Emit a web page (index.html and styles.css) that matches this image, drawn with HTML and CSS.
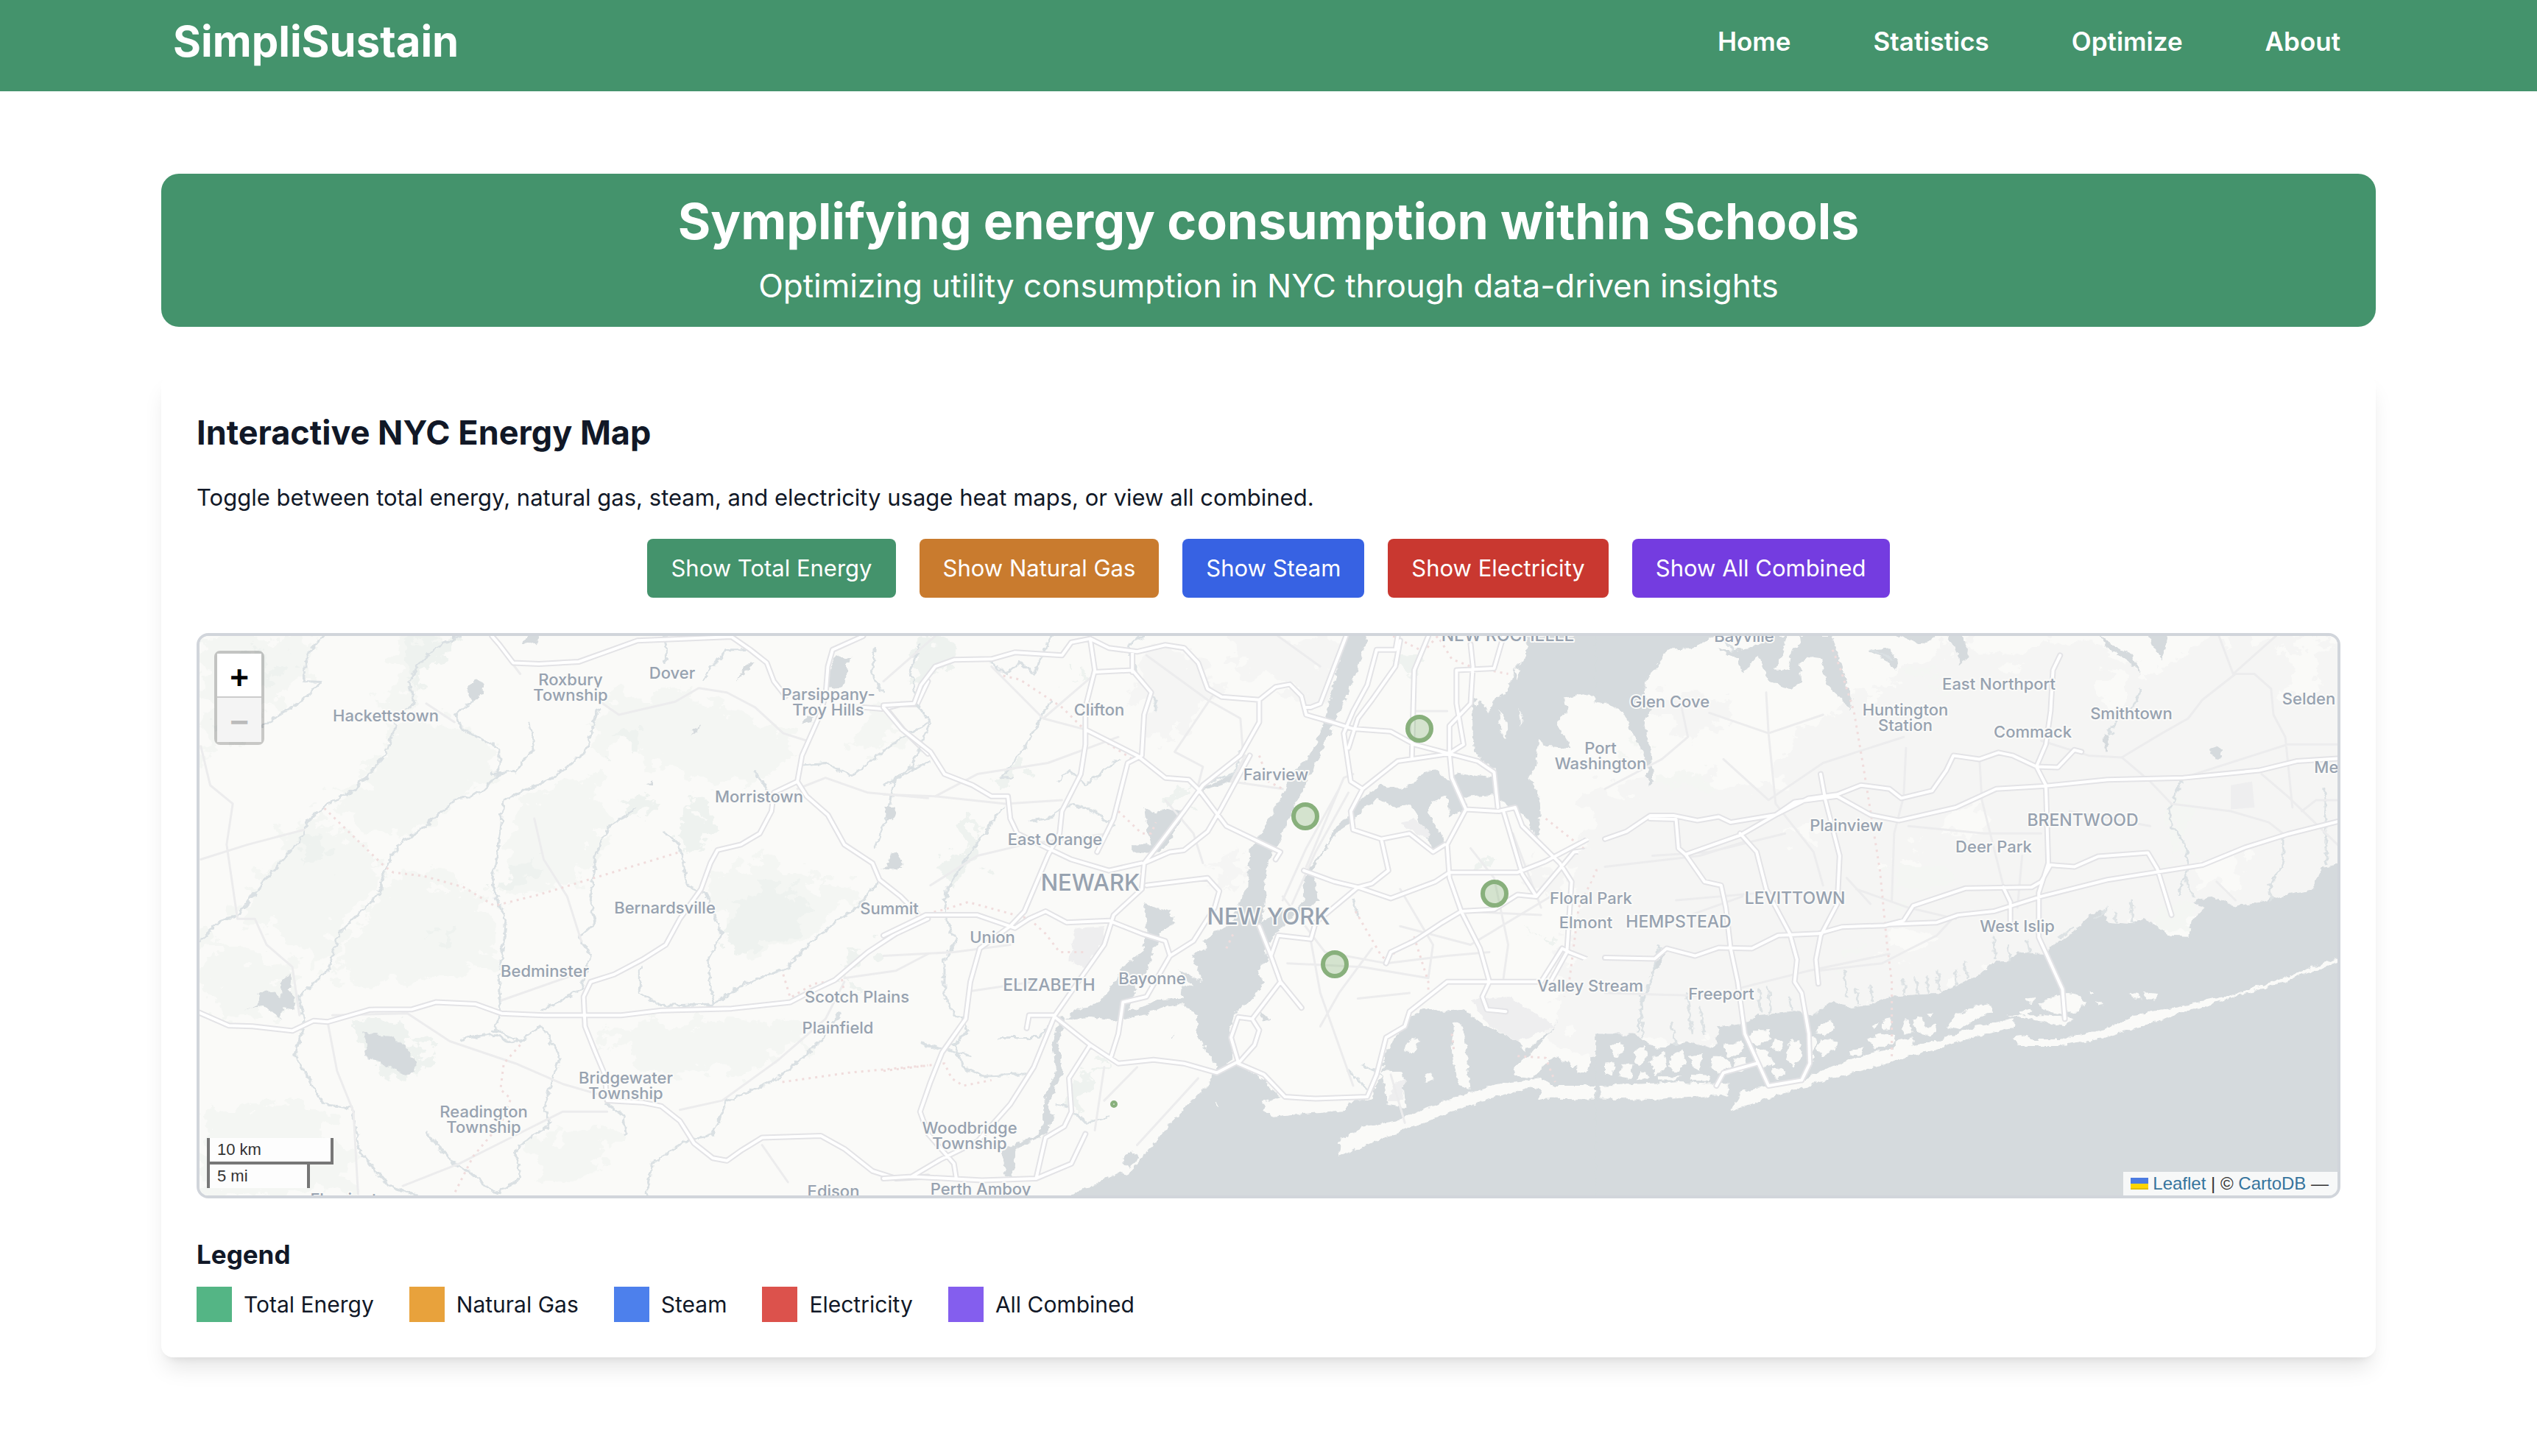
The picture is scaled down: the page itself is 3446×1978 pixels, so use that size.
FILE: index.html
```html
<!DOCTYPE html>
<html lang="en">
<head>
<meta charset="utf-8">
<meta name="viewport" content="width=device-width, initial-scale=1">
<title>SimpliSustain</title>
<link rel="stylesheet" href="styles.css">
</head>
<body>
<header class="site-header">
  <div class="header-inner">
    <a class="brand" href="#">SimpliSustain</a>
    <nav class="nav">
      <a href="#">Home</a>
      <a href="#">Statistics</a>
      <a href="#">Optimize</a>
      <a href="#">About</a>
    </nav>
  </div>
</header>
<main class="content">
  <section class="banner">
    <h1>Symplifying energy consumption within Schools</h1>
    <p>Optimizing utility consumption in NYC through data-driven insights</p>
  </section>
  <section class="card">
    <h2>Interactive NYC Energy Map</h2>
    <p class="intro">Toggle between total energy, natural gas, steam, and electricity usage heat maps, or view all combined.</p>
    <div class="toggles">
      <button class="btn total" type="button">Show Total Energy</button>
      <button class="btn gas" type="button">Show Natural Gas</button>
      <button class="btn steam" type="button">Show Steam</button>
      <button class="btn electric" type="button">Show Electricity</button>
      <button class="btn combined" type="button">Show All Combined</button>
    </div>
    <div class="map">
      <svg class="tiles" viewBox="271 864 2904 760" preserveAspectRatio="xMidYMid slice" role="img" aria-label="Map of the New York City area">
        <defs>
          <filter id="ragged" x="-5%" y="-5%" width="110%" height="110%" color-interpolation-filters="sRGB">
            <feTurbulence type="fractalNoise" baseFrequency="0.02" numOctaves="5" seed="4" result="n"/>
            <feDisplacementMap in="SourceGraphic" in2="n" scale="130" xChannelSelector="R" yChannelSelector="G"/>
          </filter>
          <filter id="shore" x="-2%" y="-2%" width="104%" height="104%" color-interpolation-filters="sRGB">
            <feTurbulence type="fractalNoise" baseFrequency="0.06" numOctaves="3" seed="9" result="n"/>
            <feDisplacementMap in="SourceGraphic" in2="n" scale="16" xChannelSelector="R" yChannelSelector="G"/>
          </filter>
          <g id="roads-west">
            <path d="M640 28L655 50L685 100L740 103L825 97L880 72L950 40L1150 30L1190 65L1225 100L1240 150L1265 190M1430 28L1365 65L1355 110L1350 190L1335 250L1300 350L1290 420L1240 450L1235 500L1210 560L1170 590L1120 605L1105 640L1085 710L1040 790L1010 860L960 900L900 940L850 960L835 1000L838 1080L860 1150L880 1210L885 1280L960 1285L1000 1295L1040 1335L1070 1395L1110 1435L1140 1442L1170 1415L1215 1380L1340 1375L1390 1410L1450 1470L1500 1490L1568 1485M1430 220L1480 225L1515 280L1568 345M1480 222L1510 212L1545 212L1568 150M1290 420L1310 460L1355 510L1390 590L1450 640L1465 685L1510 730L1545 775M15 1042L80 1078L130 1080L215 1092L260 1065L290 1068L380 1035L470 1034L520 1015L605 1020L660 1045L750 1050L915 1050L1000 1037L1150 1032L1275 1015L1320 985L1370 955L1440 880L1500 830L1568 790"/>
          </g>
          <g id="roads-mid">
            <path d="M0 215L65 210L80 160L110 110L150 92L230 90L280 72L380 80L400 45L440 35L480 60L540 70L600 52L640 60L670 100L690 170L720 192L800 200L835 165L865 158L890 190L900 240L955 260L1000 278L1080 285L1130 320L1205 345L1265 365L1300 395L1308 490M440 35L450 120L430 220L430 320L420 400L380 500L375 560L350 620L300 770L270 810M450 125L530 120L570 180L555 240L550 350L520 370L490 520L455 610M530 70L530 125M0 220L40 280L100 340L130 400L190 430L230 460L265 460L270 520L285 560L350 600L400 630L480 660L550 640M430 280L540 350L600 410L650 415L670 440L730 540L845 610L835 630M800 200L800 260L760 350L680 430L640 500L580 600L555 640L550 710L490 780L470 860L420 950L365 1050L320 1190L270 1290L200 1390L120 1440L60 1485L0 1490M555 640L610 610L640 605L690 555L720 490L780 350M560 700L690 680L715 715L705 760L660 850L610 890L600 850L550 830L480 795L390 800L345 770L310 790L280 815L200 780L90 780L0 835M270 810L205 870L185 960L175 1060L125 1150L100 1230L78 1310L95 1370L150 1450L155 1490M365 1055L440 1130L500 1180L575 1170L640 1180L710 1205L755 1175L740 1110L755 1055L785 1060L800 1090L790 1130L755 1180L810 1210L855 1270L920 1275L1030 1270L1050 1210L1070 1110L1110 1080L1120 1040L1200 960L1400 960L1445 870L1460 880L1520 910L1568 890M365 1050L310 1050L305 1085M610 890L560 1000L510 1015L500 1100L485 1160M440 1130L395 1220L400 1310L385 1350L345 1380L325 1490L210 1495L60 1485M430 1370L400 1450L325 1490M985 28L960 110L930 210L910 220M1095 28L1090 65L1050 65L1030 160L1000 230L980 290L995 420L1020 440L1095 365L1205 345M1160 28L1130 120L1125 355M1100 40L1090 110L1040 200L1010 250L990 330M1320 28L1300 115L1220 120L1220 210L1235 320L1210 340M1250 50L1255 110L1250 210L1205 270L1205 345L1210 410L1240 495L1200 590L1205 680L1230 770L1270 870L1290 960M1020 440L995 500L1000 550L1060 575L1120 560L1170 610L1195 590M1060 575L1075 660L1040 695L1010 705L960 690L895 660M1010 705L1080 735L1175 690L1205 665L1350 665L1410 635L1500 575L1568 560M1010 705L920 800L910 845L840 835L825 890L845 960L890 1030M845 960L785 1060M800 810L825 890M1240 495L1310 500L1345 490L1360 540L1440 640L1465 690L1455 880L1420 960M1320 500L1360 670L1390 730L1350 725L1300 765L1230 770L1190 800L1130 850L1080 880L1070 910M1390 730L1470 610L1568 595M1290 960L1275 1000L1285 1035L1325 1040M910 220L900 220"/>
          </g>
          <g id="roads-east">
            <path d="M0 575L45 555L95 512L145 512L195 525L240 515L265 530L360 510L430 465L490 455L540 430L600 440L625 465L690 445L720 390L735 350L790 360L830 342L860 350L910 380L955 382L990 335L1005 340M95 520L150 522L155 600L170 617L210 690L245 700L255 760L265 870L280 960L295 1100L345 1240M170 617L285 565L360 510L400 475L490 460L560 510L620 525L740 490L825 440L930 432L1060 415L1220 410L1380 390L1460 365L1545 358M455 400L465 470L495 620L490 750L455 835L445 900L450 965M285 560L320 610L340 710L390 830L405 900L400 960L415 990L430 1100L432 1180L415 1225M0 895L105 898L130 870L190 890L240 868L310 870L365 835L450 830L500 812L590 808L630 795L650 755L760 708L900 705L920 690L940 645L990 650L1040 622L1145 612L1165 655L1195 780M600 805L700 800L745 780L820 770L920 730L1060 685L1260 645L1350 598L1440 562L1545 528M960 80L945 120L940 230L930 320L910 380L930 430L935 640L915 720L915 840L965 980L970 1060M840 705L855 745L855 800M235 1240L250 1205L320 1180M345 1240L415 1225"/>
          </g>
        </defs>
        <rect class="land" x="271" y="864" width="2904" height="760"/>

        <!-- western New Jersey -->
        <g transform="translate(260 850) scale(.638 .504)">
          <g filter="url(#ragged)">
            <path class="park faint" d="M15 28L250 28L240 150L130 270L60 330L15 350ZM440 28L560 28L480 120L460 220L390 260L430 120ZM430 260L560 250L650 330L640 400L540 500L420 580L290 480L340 430L430 310ZM240 520L330 560L410 660L330 790L280 900L220 860L100 780L160 650ZM690 470L860 400L880 520L850 660L760 720L660 740ZM440 670L560 690L640 760L650 900L500 950L360 980L300 950L320 850ZM1100 660L1240 640L1330 690L1430 720L1300 850L1200 900L1140 860ZM860 200L1060 180L1230 270L1290 350L1200 420L1080 420L950 330L860 330ZM20 840L210 920L210 1040L60 1060ZM880 1080L1200 1060L1330 1110L1180 1200L960 1200ZM1430 200L1500 260L1480 330L1420 350ZM740 1390L880 1350L900 1420L800 1500L720 1500ZM40 1300L220 1280L330 1400L340 1536L15 1536Z"/>
            <path class="park" d="M460 60L520 28L580 40L510 110L470 150ZM1045 480L1110 490L1120 560L1060 620L1030 560ZM1160 740L1240 690L1320 740L1260 850L1150 890L1130 830ZM680 630L740 620L700 700L650 720ZM350 1080L440 1060L500 1140L470 1210L380 1190ZM1380 900L1450 870L1430 930L1380 950ZM250 560L300 580L280 640L230 630ZM120 60L190 90L150 160L90 140ZM60 240L110 220L90 290ZM900 280L960 300L930 350ZM500 840L560 830L540 880ZM930 450L980 480L950 530Z"/>
          </g>
          <g filter="url(#shore)">
            <path class="water" d="M590 160L605 148L622 155L618 185L600 208L590 195ZM1360 110L1375 80L1390 92L1402 88L1385 165L1355 170ZM365 1092L380 1100L420 1105L455 1130L478 1180L475 1205L455 1210L400 1175L365 1160L375 1130ZM115 1035L145 1015L140 990L175 985L190 1005L195 955L212 935L208 985L222 1000L220 1035L195 1030L190 1060L170 1040L150 1020ZM705 45L715 28L742 28L735 50ZM555 28L570 28L555 48ZM1310 245L1330 240L1322 260L1300 265ZM1065 285L1085 265L1075 282L1062 295ZM965 425L982 417L980 430ZM1483 485L1500 492L1492 525L1482 515ZM1490 615L1500 610L1515 640L1505 660L1485 655L1470 660L1490 640ZM1180 105L1200 100L1160 150Z"/>
            <path class="river" d="M280 28L245 80L240 150L275 152L240 200L205 225L150 270M570 28L520 60L480 110L463 150L475 210L440 240L430 290L410 350L350 440L280 490L245 530L240 565L160 680L100 780L60 795L20 850M600 205L560 240L580 280L655 330L655 400L615 450L560 470L500 540L440 590L415 650L400 720L315 830L290 930L230 1000L240 1070L220 1160L245 1210L280 1290L340 1300L360 1420L420 1510L480 1536M720 265L728 330L690 395L640 400M865 225L840 340L770 410L665 470L655 590L640 700L670 800L655 960L660 1040L645 1090L700 1120L745 1080L785 1160L765 1240L750 1300L765 1340L690 1410L700 1490L650 1530L610 1490L550 1440L500 1365M945 495L890 540L860 620L850 740L860 800L825 840L850 890L830 980L750 1035M1005 555L1040 590L1055 700L1095 720L1130 830L1100 900L1110 1020M1010 28L1010 100M1090 140L1140 65L1180 65M1200 390L1240 470M1300 375L1350 370L1405 405L1480 330L1568 260M1455 60L1450 130L1470 180M1568 370L1500 410L1480 520L1455 600M1465 690L1415 760L1330 840L1270 920L1180 965L1110 1020L1000 1025L955 990L955 920M1380 1045L1340 1120L1250 1220L1140 1280L1110 1370L1050 1390L980 1450L970 1536M570 1115L640 1100L680 1125L700 1120M885 1290L920 1320L925 1370"/>
          </g>
          <path class="minor" d="M20 325L40 430L88 480L75 590L98 790L135 790L160 860L215 920L230 1050M20 630L120 590L240 550M870 205L910 240L1030 205L1080 168L1140 180L1200 220L1260 290L1310 310M290 1068L310 1200L345 1310L355 1536M300 1050L460 1045L550 1120L690 1180L790 1235L885 1270M885 1310L790 1310L680 1380L570 1450L450 1510M1390 960L1350 1060L1250 1170L1130 1280L1040 1305M1390 950L1500 930L1568 885M1290 440L1350 410L1440 450L1568 465M730 520L750 630L800 730L830 850M1215 1400L1270 1500M660 1010L840 930M560 260L500 210M640 30L700 130"/>
          <path class="border" d="M283 492L412 650L430 665L495 675L580 705L645 755L740 725L1040 610M1260 940L1275 1003L1325 965L1385 955L1390 990M1258 1230L1400 1205L1568 1185M700 1130L665 1180L658 1250L680 1275L660 1340L600 1430L560 1530"/>
          <use class="casing" href="#roads-west"/>
          <use class="core" href="#roads-west"/>
        </g>

        <!-- New York harbour and boroughs -->
        <g transform="translate(1200 850) scale(.638 .504)">
          <g filter="url(#ragged)">
            <path class="urban" d="M540 90L620 60L690 110L700 190L620 320L560 300ZM760 28L985 28L940 220L890 220L850 140L740 110ZM1470 620L1568 610L1568 1200L1480 1160L1420 1060L1455 880ZM1360 640L1450 680L1430 720L1390 720ZM700 620L760 600L740 720L700 700Z"/>
            <path class="park" d="M180 530L210 545L190 640L140 720L130 660ZM275 350L300 380L285 430L260 430ZM70 40L150 40L180 80L110 110L60 150ZM1090 85L1140 75L1135 120L1100 125ZM620 430L660 430L640 480L610 500ZM405 1220L450 1190L440 1290L400 1310ZM1285 600L1305 610L1300 640L1280 640ZM390 110L410 120L395 155ZM1380 820L1440 830L1430 850Z"/>
          </g>
          <g filter="url(#shore)">
            <path class="water" d="M985 20L1032 20L1012 110L987 190L960 260L930 350L905 410L875 490L850 560L818 640L810 700L815 745L805 800L840 770L885 760L895 735L892 700L905 655L940 600L965 540L995 510L1000 480L1035 450L1060 430L1100 440L1130 425L1150 395L1175 390L1205 420L1220 398L1265 405L1305 410L1300 385L1285 375L1258 340L1255 230L1250 190L1290 210L1330 170L1345 110L1368 90L1370 10L1580 10L1580 230L1530 205L1490 183L1450 195L1455 230L1435 265L1450 295L1465 330L1410 325L1395 305L1390 385L1373 410L1395 450L1398 520L1392 580L1370 520L1335 490L1300 455L1240 460L1240 495L1205 515L1200 460L1165 475L1160 500L1195 585L1170 608L1155 570L1125 480L1090 492L1050 465L1015 505L1000 525L975 545L930 625L915 660L925 740L900 770L860 795L835 830L812 870L820 900L795 930L812 960L790 1000L750 1040L738 1090L745 1165L712 1192L668 1105L668 1050L638 1018L600 1025L560 1048L510 1058L490 1066L440 1055L385 1062L410 1035L455 1017L480 985L508 920L550 880L562 830L556 750L612 770L618 800L590 830L575 880L560 930L540 960L530 1010L520 1040L590 1008L640 1005L630 970L660 975L625 925L680 960L655 885L690 870L680 850L740 800L760 740L775 700L780 600L810 545L850 450L870 395L895 370L920 320L940 250Z"/>
            <path class="water" d="M385 1560L400 1536L450 1505L500 1475L520 1480L570 1405L620 1330L690 1235L712 1185L750 1172L770 1195L810 1225L845 1270L810 1285L808 1305L830 1325L900 1315L985 1305L990 1285L1040 1275L1060 1210L1070 1150L1090 1110L1120 1060L1150 1030L1180 1040L1235 1035L1285 1080L1350 1120L1365 1150L1420 1090L1440 1060L1410 1110L1380 1150L1350 1180L1340 1210L1380 1220L1430 1160L1470 1190L1580 1100L1580 1560ZM555 490L580 505L605 490L640 500L620 560L590 610L530 610L530 590L570 590L560 540ZM510 1430L530 1415L542 1435L525 1460L512 1450ZM800 1040L820 1060L810 1065ZM610 1115L622 1098L615 1112ZM5 490L22 490L20 520L8 525ZM15 620L35 620L38 655L5 655ZM690 430L740 405L755 385L760 405L720 430L670 450ZM255 1410L330 1370L350 1300L365 1320L335 1380L280 1410L275 1490L258 1480Z"/>
            <path class="land" d="M970 1390L1020 1350L1090 1335L1200 1280L1310 1235L1400 1220L1430 1240L1568 1240L1568 1278L1395 1275L1400 1250L1380 1243L1270 1282L1150 1340L1050 1388L972 1430ZM1060 1200L1105 1205L1112 1298L1075 1290ZM1110 1125L1140 1110L1130 1150L1112 1148ZM1215 1070L1235 1080L1250 1250L1225 1240L1210 1150ZM1150 1210L1165 1203L1172 1220L1155 1228ZM1310 225L1325 255L1328 305L1315 290ZM1355 225L1363 240L1360 275ZM1265 110L1280 100L1275 200L1260 220ZM1275 200L1295 190L1290 240ZM1345 110L1355 125L1348 145ZM1480 1160L1510 1150L1500 1200L1480 1210ZM1530 1150L1560 1130L1550 1190L1525 1180ZM1540 1200L1568 1190L1568 1225L1540 1225ZM1085 530L1110 500L1125 540L1100 545ZM707 1290L712 1285L712 1298Z"/>
            <path class="airport" d="M1250 1010L1330 1000L1430 1080L1350 1120L1290 1080ZM410 815L470 810L470 850L430 925L395 900ZM1100 535L1130 520L1165 560L1160 575ZM1090 1230L1110 1220L1105 1280L1075 1280Z"/>
            <path class="river" d="M360 28L345 60L320 130L290 100L260 130L230 100M75 50L60 120L70 210L100 260L60 380L5 430M555 28L520 50L540 130L580 200L580 230M355 205L300 330L250 410L280 410M500 360L430 430L395 390L370 420M315 525L350 520L400 480L450 500L490 540M255 490L220 550L170 640L135 710L130 780L155 850L130 900L130 990L150 1050L170 1060L180 1090L150 1130L170 1190L210 1215L300 1210M80 1125L120 1140L190 1160M250 1110L330 1110L365 1060M480 1325L430 1340L400 1300L370 1290M1000 740L1010 780M760 340L750 400L690 420M1020 1180L1060 1210M990 1200L1030 1250"/>
            <path class="river wide" d="M380 1060L365 1130L375 1200L345 1290L345 1360"/>
          </g>
          <path class="minor" d="M0 150L110 28M230 110L340 250L430 280M340 250L450 130M0 455L110 460L260 480L380 470M110 460L200 400L350 370L500 300M100 700L200 620L300 590L480 560M560 80L690 200L760 250L770 420M700 190L620 340L680 380L670 430M840 28L930 110M0 890L150 880L270 860M185 985L320 960M600 470L660 560L680 640M770 350L740 420L850 440M900 650L980 410L1000 400M850 740L900 600L970 440M870 750L920 610L990 450M850 730L940 880L1070 910L1200 890L1290 880M910 850L930 990L1000 1240M860 910L1020 920L1160 950M1100 710L1170 860L1160 950M1010 1005L1120 990M1100 810L1250 860L1420 730M1040 870L970 990L930 1080M1250 600L1300 680L1330 860L1320 950M1340 560L1400 760M1130 230L1200 230M470 1190L450 1360M540 1190L470 1280M670 1220L540 1400M1080 1210L1110 1340M1230 770L1400 780"/>
          <path class="border" d="M255 135L290 145L380 220L420 270L530 360M500 500L550 560L570 560L580 530M80 780L130 765L180 745L310 790L345 830L375 880L430 880M0 1200L130 1180L145 1220L170 1240L230 1225M800 350L820 420L850 440M1085 28L1150 70L1180 28L1210 90L1250 110L1330 130M1005 770L1060 890L1070 900L1130 840L1160 960L1160 1000M1410 520L1500 610L1518 660L1480 760L1460 960L1450 1000M1350 1160L1410 1165L1430 1230M1210 1100L1215 1150M730 870L745 830"/>
          <use class="casing" href="#roads-mid"/>
          <use class="core" href="#roads-mid"/>
        </g>

        <!-- Long Island -->
        <g transform="translate(2180 850) scale(.644 .504)">
          <g filter="url(#ragged)">
            <path class="urban" d="M0 440L110 430L220 420L345 440L400 300L520 210L640 120L720 40L850 100L1000 28L1150 130L1300 28L1600 28L1600 700L1400 780L1240 780L1040 820L850 930L600 1040L400 1080L230 1120L-40 1140L-40 440ZM110 200L240 180L250 260L160 300Z"/>
            <path class="land" d="M730 500L790 470L800 540L740 560ZM610 620L660 600L650 660L600 650ZM610 810L700 830L690 870L600 880ZM400 540L450 530L450 600L390 590ZM1440 60L1520 40L1500 180L1450 180ZM1240 620L1350 610L1330 700L1250 700ZM540 100L600 140L580 180L540 160ZM1050 120L1120 160L1090 220L1040 200Z"/>
            <path class="park faint" d="M610 650L700 640L730 690L620 740ZM1190 480L1225 470L1230 640L1195 640ZM110 390L210 400L220 430L110 440ZM505 890L530 830L545 860L520 920ZM40 310L70 320L60 360ZM1160 760L1230 750L1220 820L1180 820ZM640 130L700 120L690 180Z"/>
          </g>
          <g filter="url(#shore)">
            <path class="water" d="M-20 10L235 10L235 28L180 62L130 65L120 95L88 140L82 175L98 225L82 260L97 340L102 420L92 430L85 360L60 290L35 230L0 210L-20 205ZM300 62L355 28L480 28L497 100L520 195L515 228L500 195L468 160L455 90L425 85L412 100L415 150L390 172L345 150L325 80L290 130L278 90L240 60L270 68ZM555 68L600 62L620 95L612 122L590 88ZM600 20L700 20L690 42L665 48L640 35ZM715 20L755 20L768 85L748 108L745 70ZM1040 20L1070 52L1110 75L1130 130L1110 100L1060 60ZM1145 20L1190 20L1175 90L1160 70ZM1275 330L1290 323L1302 335L1298 360L1285 360ZM1050 290L1060 295L1062 340L1057 340ZM90 950L105 920L128 870L120 910Z"/>
            <path class="water" d="M1570 640L1545 645L1515 650L1490 712L1400 738L1330 757L1285 730L1235 745L1265 760L1240 790L1230 837L1190 835L1160 805L1135 790L1100 805L1065 802L1045 765L1015 788L985 830L950 855L925 885L872 880L850 907L822 905L785 945L740 970L700 992L650 995L600 1000L570 1018L520 1030L480 1012L440 1052L400 1040L320 1050L300 1070L240 1080L230 1140L170 1120L110 1140L60 1100L-20 1100L-20 1560L1570 1560Z"/>
            <path class="land" d="M-10 1240L160 1230L262 1235L255 1265L110 1278L-10 1275ZM265 1308L290 1255L350 1240L420 1222L480 1188L560 1152L700 1120L780 1080L860 1060L862 1085L780 1108L700 1140L600 1178L450 1230L340 1275ZM860 1110L890 1105L900 1115L960 1115L1060 1085L1120 1050L1200 1030L1340 990L1450 940L1560 890L1560 901L1420 965L1300 1010L1180 1060L1040 1115L960 1133L875 1133ZM385 28L410 28L412 58L395 65L385 120L360 118L372 80ZM845 1050L930 1050L975 1055L990 1060L970 1078L900 1062Z"/>
            <path class="land" d="M915 1020L945 1000L975 990L1000 995L1015 1015L995 1040L960 1045L925 1035ZM875 1040L900 1035L890 1055ZM1105 990L1125 992L1130 1005L1110 1000ZM1135 988L1165 992L1160 1005L1145 1005ZM1035 1010L1055 1020L1040 1022ZM1020 985L1028 990L1020 994ZM890 1010L910 1005L900 1018ZM720 1080L740 1050L780 1025L815 1020L820 1040L780 1060L750 1090ZM675 1045L695 1042L690 1060ZM650 1060L670 1055L680 1085L700 1075L690 1105L655 1095ZM625 1070L640 1060L648 1095L630 1105ZM560 1075L575 1070L570 1090ZM585 1065L605 1060L602 1090L585 1085ZM555 1115L580 1100L610 1105L605 1130L570 1140ZM610 1120L650 1110L650 1130L610 1150ZM450 1080L475 1065L485 1085L465 1105L445 1098ZM445 1130L465 1115L490 1120L485 1145L455 1160ZM390 1120L410 1115L415 1160L395 1190L380 1160ZM355 1115L378 1120L370 1150L350 1140ZM310 1090L345 1090L350 1115L320 1130L300 1110ZM320 1140L345 1145L355 1180L330 1200L318 1170ZM250 1130L290 1120L290 1150L260 1165ZM225 1160L250 1160L270 1190L240 1205L220 1190ZM270 1165L295 1165L300 1195L280 1205ZM180 1160L205 1155L200 1200L185 1190ZM140 1160L165 1140L170 1180L150 1205L135 1190ZM95 1170L125 1150L130 1190L105 1215ZM60 1150L85 1130L90 1160L70 1190ZM35 1180L60 1180L55 1220L30 1215ZM10 1130L35 1120L40 1150L20 1165ZM0 1180L20 1175L15 1210L0 1210ZM75 1200L95 1215L70 1225ZM350 1190L380 1200L360 1225ZM110 1215L160 1215L150 1225L110 1225ZM180 1210L225 1215L220 1228L180 1225ZM430 1110L445 1112L440 1170L430 1170ZM515 1145L545 1140L540 1155L518 1158Z"/>
            <path class="creek" d="M1110 740L1115 800M1075 770L1080 800M1035 790L1060 760M960 840L990 810M820 840L822 900M850 860L855 900M890 850L895 880M760 910L765 950M740 930L745 965M700 930L705 985M680 950L682 990M655 950L660 990M630 955L632 995M560 970L565 1010M530 980L535 1020M505 930L510 1000M345 970L350 1040M325 980L330 1040M390 1000L395 1035M200 1030L210 1100M170 990L185 1100M75 990L80 1110M140 1070L150 1130M1225 680L1240 730M1400 700L1405 740"/>
            <path class="river" d="M1215 420L1190 500L1195 540L1225 590L1230 650L1210 720M1430 560L1430 640L1400 710M1520 440L1520 640M1130 170L1120 210L1090 240L1060 290L1070 290M115 860L105 930L80 1010M560 65L610 90M245 28L270 65M80 1000L70 1090"/>
          </g>
          <path class="minor" d="M1295 28L1325 130L1415 28M1325 130L1370 130L1405 170L1410 240L1435 300L1450 490M1330 130L1260 200L1230 250L1175 290L1090 355L1020 350L920 310M1090 355L1150 420L1195 480L1320 500L1400 530L1430 560M1385 400L1440 460L1545 590M790 360L795 470L840 700M635 330L630 460L610 560L605 740M160 210L175 300L120 360L0 440M220 235L345 290L460 240M250 360L345 470L460 370L630 300M340 180L345 290L360 480L440 610L460 700M0 650L200 620L300 580M100 620L220 610L380 560M150 740L330 720M180 780L290 730M450 930L585 910L630 880L700 835L740 780M290 975L430 930L600 885M530 710L640 760L740 790M510 680L560 750M0 990L130 995L280 1000M640 540L800 560L920 560M1220 410L1440 320L1545 320M1290 690L1330 740M1470 500L1500 470L1545 470M870 760L880 620M980 500L1150 540"/>
          <path class="border" d="M480 65L495 110L525 230L545 380L560 500L580 660L595 860L605 960L605 1170"/>
          <path class="airport" d="M1320 430L1365 420L1370 490L1320 495Z"/>
          <use class="casing" href="#roads-east"/>
          <use class="core" href="#roads-east"/>
        </g>

        <g class="labels">
          <text x="524" y="980">Hackettstown</text>
          <text x="775" y="931">Roxbury</text><text x="775" y="952">Township</text>
          <text x="913" y="922">Dover</text>
          <text x="1125" y="951">Parsippany-</text><text x="1125" y="972">Troy Hills</text>
          <text x="1031" y="1090">Morristown</text>
          <text x="903" y="1241">Bernardsville</text>
          <text x="1208" y="1242">Summit</text>
          <text x="740" y="1327">Bedminster</text>
          <text x="1164" y="1362">Scotch Plains</text>
          <text x="1138" y="1404">Plainfield</text>
          <text x="850" y="1472">Bridgewater</text><text x="850" y="1493">Township</text>
          <text x="657" y="1518">Readington</text><text x="657" y="1539">Township</text>
          <text x="480" y="1637">Flemington</text>
          <text x="1132" y="1626">Edison</text>
          <text x="1493" y="972">Clifton</text>
          <text x="1733" y="1060">Fairview</text>
          <text x="1433" y="1148">East Orange</text>
          <text x="1348" y="1281">Union</text>
          <text x="1565" y="1337">Bayonne</text>
          <text x="1317" y="1540">Woodbridge</text><text x="1317" y="1561">Township</text>
          <text x="1332" y="1623">Perth Amboy</text>
          <text x="2161" y="1228">Floral Park</text>
          <text x="2154" y="1261">Elmont</text>
          <text x="2160" y="1347">Valley Stream</text>
          <text x="2174" y="1024">Port</text><text x="2174" y="1045">Washington</text>
          <text x="2369" y="872">Bayville</text>
          <text x="2268" y="961">Glen Cove</text>
          <text x="2715" y="937">East Northport</text>
          <text x="2588" y="972">Huntington</text><text x="2588" y="993">Station</text>
          <text x="2761" y="1002">Commack</text>
          <text x="2895" y="977">Smithtown</text>
          <text x="3136" y="957">Selden</text>
          <text x="3188" y="1050">Medford</text>
          <text x="2508" y="1129">Plainview</text>
          <text x="2708" y="1158">Deer Park</text>
          <text x="2740" y="1266">West Islip</text>
          <text x="2338" y="1358">Freeport</text>
          <g class="town">
            <text x="1425" y="1346">ELIZABETH</text>
            <text x="2048" y="871">NEW ROCHELLE</text>
            <text x="2829" y="1122">BRENTWOOD</text>
            <text x="2438" y="1228">LEVITTOWN</text>
            <text x="2280" y="1260">HEMPSTEAD</text>
          </g>
          <g class="city">
            <text x="1481" y="1210">NEWARK</text>
            <text x="1723" y="1256">NEW YORK</text>
          </g>
        </g>

        <g class="markers">
          <circle cx="1928" cy="990" r="16"/>
          <circle cx="1773" cy="1109" r="16"/>
          <circle cx="2030" cy="1214" r="16"/>
          <circle cx="1813" cy="1310" r="16"/>
          <circle cx="1513" cy="1500" r="2"/>
        </g>
      </svg>
      <div class="zoom">
        <button type="button" aria-label="Zoom in">+</button>
        <button type="button" aria-label="Zoom out" disabled>−</button>
      </div>
      <div class="scale">
        <div class="scale-line km">10 km</div>
        <div class="scale-line mi">5 mi</div>
      </div>
      <div class="attribution">
        <svg class="flag" viewBox="0 0 12 8" aria-hidden="true"><path fill="#4c7be1" d="M0 0h12v4H0z"/><path fill="#ffd500" d="M0 4h12v3H0z"/><path fill="#e0bc00" d="M0 7h12v1H0z"/></svg>
        <a href="#">Leaflet</a> | © <a href="#">CartoDB</a> —
      </div>
    </div>
    <h3>Legend</h3>
    <ul class="legend">
      <li><span class="swatch total"></span>Total Energy</li>
      <li><span class="swatch gas"></span>Natural Gas</li>
      <li><span class="swatch steam"></span>Steam</li>
      <li><span class="swatch electric"></span>Electricity</li>
      <li><span class="swatch combined"></span>All Combined</li>
    </ul>
  </section>
</main>
</body>
</html>
```
FILE: styles.css
```css
* { box-sizing: border-box; }

body {
  margin: 0;
  background: #fff;
  color: #111827;
  font-family: Inter, "Liberation Sans", sans-serif;
  font-size: 31px;
  line-height: 48px;
}

h1, h2, h3, p, ul { margin: 0; padding: 0; }

.site-header { background: #44936c; color: #fff; }

.header-inner {
  display: flex;
  align-items: center;
  justify-content: space-between;
  max-width: 3072px;
  margin: 0 auto;
  padding: 20px 48px 32px;
}

.brand {
  color: #fff;
  font-size: 58px;
  font-weight: 700;
  line-height: 72px;
  text-decoration: none;
}

.nav { display: flex; gap: 48px; }

.nav a {
  padding: 0 32px;
  color: #fff;
  font-size: 35px;
  font-weight: 600;
  text-decoration: none;
}

.content {
  display: flex;
  flex-direction: column;
  gap: 64px;
  max-width: 3072px;
  margin: 0 auto;
  padding: 112px 32px;
}

.banner {
  display: flex;
  flex-direction: column;
  gap: 16px;
  padding: 24px;
  border-radius: 24px;
  background: #44936c;
  color: #fff;
  text-align: center;
}

.banner h1 { font-size: 68px; font-weight: 700; line-height: 80px; }
.banner p { font-size: 44px; line-height: 64px; }

.card {
  padding: 48px;
  border-radius: 16px;
  background: #fff;
  box-shadow: 0 20px 30px -6px rgba(0, 0, 0, 0.1), 0 8px 12px -8px rgba(0, 0, 0, 0.1);
}

.card h2 { margin-bottom: 32px; font-size: 45px; font-weight: 700; line-height: 64px; }
.card h3 { margin-bottom: 16px; font-size: 35px; font-weight: 700; line-height: 56px; }
.intro { margin-bottom: 32px; }

.toggles {
  display: flex;
  flex-wrap: wrap;
  justify-content: center;
  gap: 32px;
  margin-bottom: 48px;
}

.btn {
  padding: 16px 32px;
  border: 0;
  border-radius: 8px;
  color: #fff;
  font: inherit;
  cursor: pointer;
}

.btn.total { background: #44936c; }
.btn.gas { background: #c97b2e; }
.btn.steam { background: #3762e3; }
.btn.electric { background: #c93830; }
.btn.combined { background: #743ce0; }

.map {
  position: relative;
  height: 768px;
  margin-bottom: 48px;
  overflow: hidden;
  border: 4px solid #d1d5db;
  border-radius: 16px;
  background: #fafaf8;
}

.tiles { display: block; width: 100%; height: 100%; }
.tiles path { vector-effect: non-scaling-stroke; }
.land { fill: #fafaf8; }
.urban { fill: #f5f5f4; }
.park { fill: #eef2ef; }
.park.faint { fill: #f4f6f3; }
.water { fill: #d5dadd; }
.airport { fill: #eeeeef; }
.river, .minor, .border, .creek, .casing, .core { fill: none; stroke-linejoin: round; stroke-linecap: round; }
.river { stroke: #dae0e3; stroke-width: 3px; }
.river.wide { stroke: #d5dadd; stroke-width: 8px; }
.creek { stroke: #dde2e4; stroke-width: 3px; }
.minor { stroke: #ececed; stroke-width: 3px; }
.border { stroke: #f0dcdc; stroke-width: 3px; stroke-dasharray: 3 6; stroke-linecap: butt; }
.casing { stroke: #e3e3e6; stroke-width: 8px; }
.core { stroke: #fff; stroke-width: 4px; }

.labels {
  fill: #97a2b0;
  stroke: #fafaf8;
  stroke-width: 4px;
  stroke-linejoin: round;
  paint-order: stroke;
  font-size: 22px;
  font-weight: 500;
  text-anchor: middle;
}

.labels .town { font-size: 23px; }
.labels .city { font-size: 31px; }

.markers { fill: rgba(100, 160, 80, 0.25); stroke: #88b07c; stroke-width: 6px; }

.zoom {
  position: absolute;
  top: 20px;
  left: 20px;
  display: flex;
  flex-direction: column;
  border: 4px solid rgba(0, 0, 0, 0.2);
  border-radius: 8px;
}

.zoom button {
  width: 60px;
  height: 60px;
  padding: 6px 0 0;
  border: 0;
  background: #fff;
  color: #000;
  font: 700 44px/54px "Liberation Sans", Arial, sans-serif;
}

.zoom button:first-child { border-bottom: 2px solid #ccc; }
.zoom button:disabled { background: #f4f4f4; color: #bbb; }

.scale {
  position: absolute;
  bottom: 10px;
  left: 10px;
  color: #333;
  font: 22px/32px "Liberation Sans", Arial, sans-serif;
}

.scale-line {
  padding: 0 10px;
  border: 4px solid #777;
  border-top: 0;
  background: rgba(255, 255, 255, 0.8);
}

.scale-line.km { width: 172px; }
.scale-line.mi { width: 140px; border-bottom: 0; }

.attribution {
  position: absolute;
  right: 0;
  bottom: 0;
  padding: 0 12px 0 10px;
  background: rgba(255, 255, 255, 0.8);
  color: #333;
  font: 24px/32px "Liberation Sans", Arial, sans-serif;
}

.attribution a { color: #36749d; text-decoration: none; }
.flag { width: 24px; height: 16px; }

.legend { display: flex; flex-wrap: wrap; gap: 48px; font-size: 30px; list-style: none; }
.legend li { display: flex; align-items: center; gap: 16px; }
.swatch { width: 48px; height: 48px; }
.swatch.total { background: #54b585; }
.swatch.gas { background: #e8a23c; }
.swatch.steam { background: #4d80ec; }
.swatch.electric { background: #dc524c; }
.swatch.combined { background: #845eee; }
```
